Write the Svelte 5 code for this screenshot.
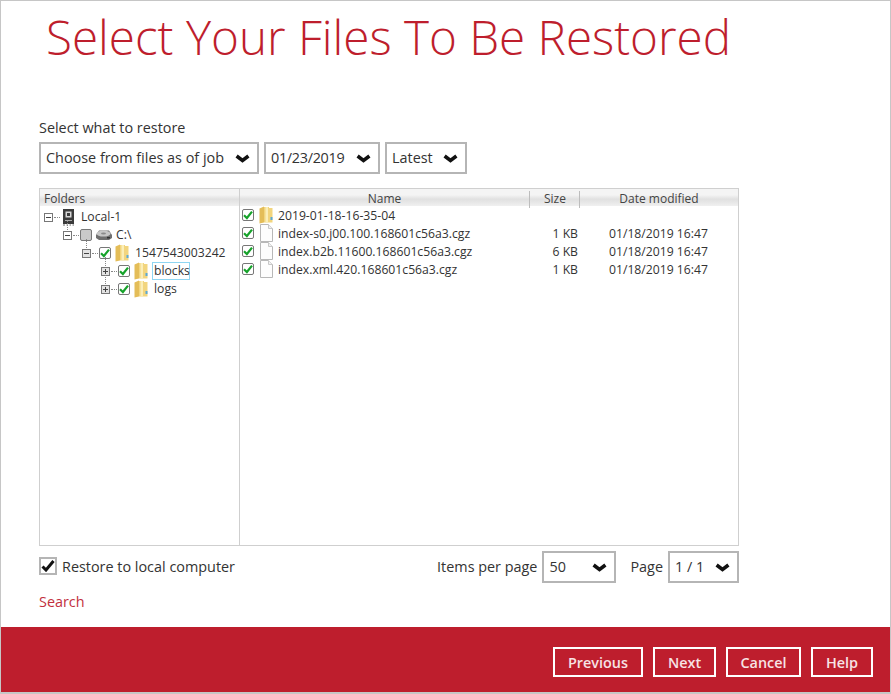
<script>
  const tree = [
    { depth: 0, open: true, kind: "server", label: "Local-1" },
    { depth: 1, open: true, check: "partial", kind: "drive", label: "C:\\" },
    { depth: 2, open: true, check: "on", kind: "folder", label: "1547543003242" },
    { depth: 3, open: false, check: "on", kind: "folder", label: "blocks", selected: true },
    { depth: 3, open: false, check: "on", kind: "folder", label: "logs" },
  ];

  const files = [
    { name: "2019-01-18-16-35-04", kind: "folder", size: "", date: "" },
    { name: "index-s0.j00.100.168601c56a3.cgz", kind: "file", size: "1 KB", date: "01/18/2019 16:47" },
    { name: "index.b2b.11600.168601c56a3.cgz", kind: "file", size: "6 KB", date: "01/18/2019 16:47" },
    { name: "index.xml.420.168601c56a3.cgz", kind: "file", size: "1 KB", date: "01/18/2019 16:47" },
  ];
</script>

{#snippet chevron()}
  <svg class="chevron" width="15" height="10" viewBox="0 0 15 10" aria-hidden="true">
    <path d="M1.6 2 L7.5 6.4 L13.4 2" fill="none" stroke="#111" stroke-width="3.6" />
  </svg>
{/snippet}

{#snippet select(label, cls)}
  <div class="select {cls}">
    <span>{label}</span>
    {@render chevron()}
  </div>
{/snippet}

{#snippet checkbox(state)}
  <span class="check" class:partial={state === "partial"}>
    {#if state === "on"}
      <svg width="10" height="10" viewBox="0 0 10 10" aria-hidden="true">
        <path d="M1 5.2 L3.9 8 L9 1.6" fill="none" stroke="#17a32b" stroke-width="2.2" />
      </svg>
    {/if}
  </span>
{/snippet}

{#snippet folder()}
  <svg class="icon" width="14" height="18" viewBox="0 0 14 18" aria-hidden="true">
    <path d="M5 1 L10 1 L10 2 L13.5 2 L13.5 16.5 L5 16.5 Z" fill="#f2d57e" />
    <path d="M0.5 2.5 L5 0.5 L5 16.5 L0.5 17.5 Z" fill="#e4bd58" />
    <path d="M6.5 1 L9 1 L9 16.5 L6.5 16.5 Z" fill="#fbeeb8" />
    <path d="M11.5 11 L13.5 11 L13.5 14 L11.5 14 Z" fill="#5aa9d8" />
  </svg>
{/snippet}

{#snippet file()}
  <svg class="icon" width="14" height="18" viewBox="0 0 14 18" aria-hidden="true">
    <path d="M1.5 0.5 H9.5 L13.5 4.5 V17.5 H1.5 Z" fill="#fdfdfd" stroke="#b8b8b8" />
    <path d="M9.5 0.5 V4.5 H13.5" fill="#f0f0f0" stroke="#c8c8c8" />
  </svg>
{/snippet}

{#snippet server()}
  <svg class="icon" width="11" height="17" viewBox="0 0 11 17" aria-hidden="true">
    <rect x="0" y="0" width="11" height="15" fill="#3b3b3b" />
    <rect x="2.5" y="2.5" width="6" height="6" fill="#d8d8d8" />
    <rect x="4" y="4" width="3" height="3" fill="#3b3b3b" />
    <rect x="2" y="11" width="7" height="1" fill="#aaa" />
    <path d="M0 16 H2 M3.5 16 H5 M6.5 16 H8 M9.5 16 H11" stroke="#666" />
  </svg>
{/snippet}

{#snippet drive()}
  <svg class="icon" width="16" height="12" viewBox="0 0 16 12" aria-hidden="true">
    <path d="M3 1.5 H13 L16 6 V9 L13 11 H3 L0 9 V6 Z" fill="#6f6f6f" />
    <ellipse cx="7.5" cy="4.6" rx="7" ry="3" fill="#c6c6c6" />
    <ellipse cx="7.5" cy="4.6" rx="2.5" ry="1" fill="#8a8a8a" />
    <rect x="11" y="8" width="3" height="1.5" fill="#333" />
  </svg>
{/snippet}

<div class="window">
  <h1>Select Your Files To Be Restored</h1>

  <main>
    <p class="what">Select what to restore</p>
    <div class="selects">
      {@render select("Choose from files as of job", "job")}
      {@render select("01/23/2019", "date")}
      {@render select("Latest", "latest")}
    </div>

    <div class="browser">
      <section class="folders">
        <div class="head folders-head">Folders</div>
        <ul class="tree">
          {#each tree as node, i}
            <li class="node {node.kind}" style="padding-left: {node.depth * 19}px">
              <span class="expander" class:stem={i > 0} class:dim={node.depth >= 2}>
                <i class="h"></i>
                {#if !node.open}<i class="v"></i>{/if}
              </span>
              <span class="dots"></span>
              {#if node.check}{@render checkbox(node.check)}{/if}
              {#if node.kind === "server"}
                {@render server()}
              {:else if node.kind === "drive"}
                {@render drive()}
              {:else}
                {@render folder()}
              {/if}
              <span class="label" class:selected={node.selected}>{node.label}</span>
            </li>
          {/each}
        </ul>
      </section>

      <section class="files">
        <div class="head cols">
          <span class="col-name">Name</span>
          <span class="col-size">Size</span>
          <span class="col-date">Date modified</span>
        </div>
        <ul class="rows">
          {#each files as row}
            <li class="cols row">
              <span class="cell-name">
                {@render checkbox("on")}
                {#if row.kind === "folder"}{@render folder()}{:else}{@render file()}{/if}
                <span class="file-label">{row.name}</span>
              </span>
              <span class="cell-size">{row.size}</span>
              <span class="cell-date">{row.date}</span>
            </li>
          {/each}
        </ul>
      </section>
    </div>

    <div class="options">
      <label class="local">
        <span class="big-check">
          <svg width="14" height="12" viewBox="0 0 14 12" aria-hidden="true">
            <path d="M1.5 6.5 L5 10 L12.5 1" fill="none" stroke="#111" stroke-width="3" />
          </svg>
        </span>
        Restore to local computer
      </label>
      <div class="paging">
        <span>Items per page</span>
        {@render select("50", "per-page")}
        <span class="page-label">Page</span>
        {@render select("1 / 1", "page")}
      </div>
    </div>

    <a class="search" href="#search">Search</a>
  </main>

  <footer>
    <button class="prev">Previous</button>
    <button class="next">Next</button>
    <button class="cancel">Cancel</button>
    <button class="help">Help</button>
  </footer>
</div>

<style>
  :global(body) {
    margin: 0;
    background: #fff;
  }

  .window {
    box-sizing: border-box;
    width: 891px;
    height: 694px;
    display: flex;
    flex-direction: column;
    border: 1px solid #c6c6c6;
    border-bottom-width: 2px;
    font-family: "Open Sans", sans-serif;
    font-size: 14.4px;
    color: #333;
    overflow: hidden;
  }

  h1 {
    margin: 0;
    padding: 0 0 2px 45px;
    height: 71px;
    font-size: 47.6px;
    line-height: 71px;
    font-weight: 300;
    color: #be1e2d;
    white-space: nowrap;
  }

  main {
    flex: 1;
    padding: 45px 0 0 38px;
    min-height: 0;
  }

  .what {
    margin: 0;
    height: 20px;
    line-height: 18px;
  }

  .selects {
    display: flex;
    gap: 5px;
    height: 32px;
    margin-top: 3px;
  }

  .select {
    box-sizing: border-box;
    display: flex;
    align-items: center;
    justify-content: space-between;
    height: 32px;
    padding: 0 7px 2px 5px;
    border: 2px solid #b5b5b5;
    background: #fff;
  }

  .chevron {
    flex: none;
    margin-top: 3px;
  }

  .job { width: 220px; }
  .date { width: 116px; letter-spacing: -0.3px; }
  .latest { width: 82px; }
  .per-page { width: 74px; }
  .page { width: 71px; }

  .browser {
    box-sizing: border-box;
    display: flex;
    width: 700px;
    height: 358px;
    margin-top: 14px;
    border: 1px solid #cfcfcf;
    font-size: 12.2px;
  }

  .head {
    box-sizing: border-box;
    height: 17px;
    line-height: 20px;
    font-size: 12px;
    color: #444;
    background: linear-gradient(#f4f4f4 0 35%, #e0e0e0 60%, #f0f0f0);
  }

  .folders {
    box-sizing: border-box;
    flex: none;
    width: 200px;
    border-right: 1px solid #cfcfcf;
  }

  .folders-head {
    padding-left: 4px;
  }

  ul {
    list-style: none;
    margin: 0;
    padding: 0;
  }

  .tree {
    padding: 2px 0 0 4px;
  }

  .node {
    display: flex;
    align-items: center;
    height: 18px;
  }

  .expander {
    position: relative;
    box-sizing: border-box;
    flex: none;
    width: 9px;
    height: 9px;
    border: 1px solid #777;
    background: #fff;
  }

  .expander.stem::before {
    content: "";
    position: absolute;
    left: 3px;
    top: -11px;
    height: 9px;
    border-left: 1px dotted #888;
  }

  .expander.dim {
    background: #e3e3e3;
  }

  .expander .h {
    position: absolute;
    left: 1px;
    right: 1px;
    top: 3px;
    height: 1px;
    background: #444;
  }

  .expander .v {
    position: absolute;
    top: 1px;
    left: 3px;
    width: 1px;
    height: 5px;
    background: #444;
  }

  .dots {
    flex: none;
    width: 6px;
    margin: 0 1px;
    border-top: 1px dotted #888;
  }

  .check {
    box-sizing: border-box;
    flex: none;
    display: flex;
    align-items: center;
    justify-content: center;
    width: 12px;
    height: 12px;
    border: 1px solid #777;
    border-radius: 2px;
    background: #fff;
  }

  .check.partial {
    background: #c9c9c9;
  }

  .icon {
    flex: none;
    margin-left: 4px;
  }

  .server .icon {
    margin-left: 2px;
  }

  .label {
    box-sizing: border-box;
    margin-left: 4px;
    padding: 0 2px;
    height: 18px;
    line-height: 17px;
    white-space: nowrap;
  }

  .drive .label {
    margin-left: 2px;
  }

  .server .label {
    margin-left: 5px;
  }

  .label.selected {
    border: 1px solid #8fd6f2;
    padding: 0 1px;
    width: 38px;
    line-height: 15px;
  }

  .files {
    flex: 1;
    min-width: 0;
  }

  .cols {
    display: grid;
    grid-template-columns: 289px 50px 1fr;
  }

  .head.cols span {
    text-align: center;
  }

  .col-size,
  .col-date {
    border-left: 1px solid #bdbdbd;
    margin: 2px 0 1px;
    line-height: 15px;
  }

  .col-size {
    padding-left: 1px;
  }

  .col-name {
    line-height: 20px;
  }

  .row {
    height: 18px;
    line-height: 17px;
    align-items: center;
  }

  .cell-name {
    display: flex;
    align-items: center;
    padding-left: 2px;
    white-space: nowrap;
  }

  .cell-name .icon {
    margin-left: 5px;
  }

  .file-label {
    margin-left: 5px;
  }

  .cell-size {
    text-align: right;
    padding-right: 1px;
  }

  .cell-date {
    padding-left: 30px;
    white-space: nowrap;
  }

  .options {
    display: flex;
    justify-content: space-between;
    align-items: center;
    width: 700px;
    height: 32px;
    margin-top: 5px;
  }

  .local {
    display: flex;
    align-items: center;
    gap: 5px;
    padding-bottom: 2px;
  }

  .big-check {
    box-sizing: border-box;
    display: flex;
    align-items: center;
    justify-content: center;
    width: 18px;
    height: 18px;
    border: 2px solid #b5b5b5;
    background: #fff;
  }

  .paging {
    display: flex;
    align-items: center;
    gap: 5px;
  }

  .paging > span {
    padding-bottom: 2px;
  }

  .page-label {
    margin-left: 9px;
  }

  .search {
    display: block;
    margin-top: 9px;
    line-height: 20px;
    color: #c22f3d;
    text-decoration: none;
  }

  footer {
    flex: none;
    display: flex;
    justify-content: flex-end;
    gap: 10px;
    height: 65px;
    box-sizing: border-box;
    padding: 20px 17px 0 0;
    background: #be1e2d;
  }

  button {
    box-sizing: border-box;
    height: 30px;
    padding: 0;
    border: 2px solid #fff;
    background: transparent;
    color: #f7e3e5;
    font-family: inherit;
    font-size: 14.4px;
    font-weight: 600;
  }

  .prev { width: 90px; }
  .next { width: 63px; }
  .cancel { width: 75px; }
  .help { width: 62px; }
</style>
